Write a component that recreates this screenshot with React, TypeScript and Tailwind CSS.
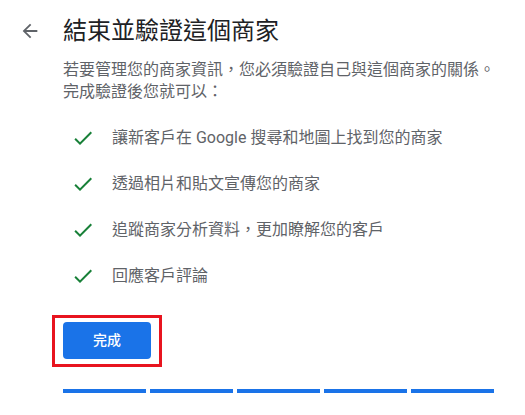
import React from "react";

const items = [
  "讓新客戶在 Google 搜尋和地圖上找到您的商家",
  "透過相片和貼文宣傳您的商家",
  "追蹤商家分析資料，更加瞭解您的客戶",
  "回應客戶評論",
];

function Check() {
  return (
    <svg width="24" height="24" viewBox="0 0 24 24" className="shrink-0">
      <path d="M9 16.17L4.83 12l-1.42 1.41L9 19 21 7l-1.41-1.41z" fill="#188038" />
    </svg>
  );
}

export default function App() {
  return (
    <div
      className="w-[525px] h-[415px] bg-white overflow-hidden"
      style={{ fontFamily: 'Roboto, "Noto Sans CJK TC", "Noto Sans", sans-serif' }}
    >
      <div className="flex pt-[15px]">
        <div className="w-[63px] shrink-0 flex justify-center pl-[0px]">
          <div className="w-[24px] h-[32px] flex items-center -translate-x-[1px]">
            <svg width="22" height="22" viewBox="0 0 24 24">
              <path d="M20 11H7.83l5.59-5.59L12 4l-8 8 8 8 1.41-1.41L7.83 13H20v-2z" fill="#5f6368" />
            </svg>
          </div>
        </div>
        <div className="flex flex-col">
          <h1 className="text-[24px] leading-[32px] text-[#202124] font-normal">結束並驗證這個商家</h1>
          <p className="mt-[12px] text-[16px] leading-[22px] text-[#5f6368]">
            若要管理您的商家資訊，您必須驗證自己與這個商家的關係。
            <br />
            完成驗證後您就可以：
          </p>
          <ul className="mt-[12px] flex flex-col">
            {items.map((t) => (
              <li key={t} className="h-[46px] flex items-center text-[16px] text-[#5f6368]">
                <div className="w-[49px] flex pl-[8px]">
                  <Check />
                </div>
                <span>{t}</span>
              </li>
            ))}
          </ul>
          <div className="mt-[16px] -ml-[11px] self-start border-[3px] border-[#e8141f] px-[8px] pt-[4px] pb-[5px]">
            <button className="w-[88px] h-[37px] rounded-[4px] bg-[#1a73e8] text-white text-[14px] font-medium flex items-center justify-center">
              完成
            </button>
          </div>
          <div className="mt-[22px] flex gap-[4px]">
            {[0, 1, 2, 3, 4].map((i) => (
              <div key={i} className="w-[83px] h-[4px] bg-[#1a73e8]" />
            ))}
          </div>
        </div>
      </div>
    </div>
  );
}
